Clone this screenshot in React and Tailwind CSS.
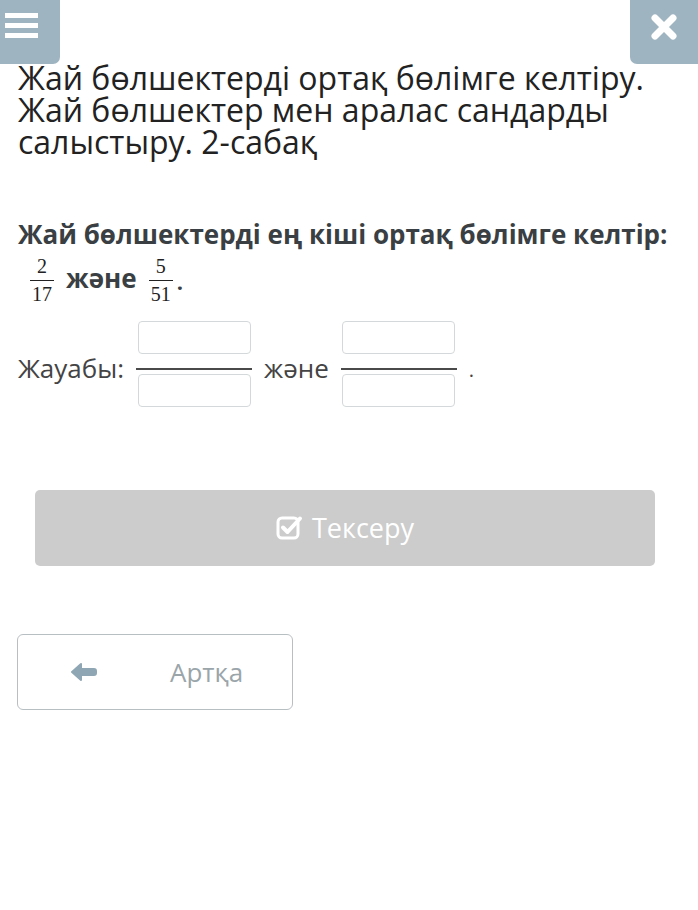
import React from 'react';

const font = { fontFamily: '"Open Sans", "Noto Sans", sans-serif' };

const Frac = ({ top, bottom }) => (
  <span className="inline-flex flex-col items-center align-middle mx-[2px] font-['Liberation_Serif',serif] font-normal text-[20px] leading-none text-[#222]">
    <span className="px-[2px] pb-[4px]">{top}</span>
    <span className="w-full border-t border-[#222]" />
    <span className="px-[2px] pt-[3px]">{bottom}</span>
  </span>
);

const InputFrac = () => (
  <div className="flex flex-col items-center w-[116px]">
    <div className="w-[113px] h-[33px] border border-[#d4d8da] rounded-[4px] bg-white" />
    <div className="w-[116px] h-[2px] bg-[#4a4a4a] mt-[14px] mb-[4px]" />
    <div className="w-[113px] h-[33px] border border-[#d4d8da] rounded-[4px] bg-white" />
  </div>
);

export default function App() {
  return (
    <div className="w-[698px] h-[910px] bg-white relative" style={font}>
      <div className="flex justify-between">
        <button className="w-[60px] h-[64px] bg-[#9fb4c1] rounded-br-[7px] flex flex-col gap-[5px] pt-[13px] pl-[5px]">
          <span className="block w-[33px] h-[5px] bg-white" />
          <span className="block w-[33px] h-[5px] bg-white" />
          <span className="block w-[33px] h-[5px] bg-white" />
        </button>
        <button className="w-[68px] h-[64px] bg-[#9fb4c1] rounded-bl-[7px] flex items-start justify-center pt-[14px]">
          <svg width="26" height="26" viewBox="0 0 26 26">
            <path d="M4 4 L22 22 M22 4 L4 22" stroke="white" strokeWidth="7" strokeLinecap="round" />
          </svg>
        </button>
      </div>

      <h1 className="px-[18px] text-[32px] leading-[32px] text-[#222] font-normal -mt-[2px]">
        Жай бөлшектерді ортақ бөлімге келтіру. Жай бөлшектер мен аралас сандарды салыстыру. 2-сабақ
      </h1>

      <div className="px-[18px] mt-[59px] text-[26px] font-bold text-[#3a3f44] leading-[34px] whitespace-nowrap">
        Жай бөлшектерді ең кіші ортақ бөлімге келтір:
      </div>
      <div className="px-[28px] mt-[5px] flex items-center gap-[10px] text-[26px] font-bold text-[#3a3f44]">
        <Frac top="2" bottom="17" />
        <span className="-mt-[4px]">және</span>
        <span className="flex items-center">
          <Frac top="5" bottom="51" />
          <span className="text-[22px] ml-[2px] mt-[2px]">.</span>
        </span>
      </div>

      <div className="px-[18px] mt-[17px] flex items-center text-[26px] text-[#444]">
        <span className="mr-[12px] mt-[8px]">Жауабы:</span>
        <InputFrac />
        <span className="mx-[12px] mt-[8px]">және</span>
        <InputFrac />
        <span className="ml-[12px] text-[20px] mt-[12px]">.</span>
      </div>

      <div className="px-[35px] mt-[83px]">
        <button className="w-[620px] h-[76px] bg-[#cccccc] rounded-[5px] flex items-center justify-center gap-[9px] text-white text-[27px]">
          <svg width="27" height="27" viewBox="0 0 27 27" fill="none" className="-mt-[2px]">
            <rect x="2" y="4" width="20" height="20" rx="4" stroke="white" strokeWidth="3" />
            <path d="M7 13.5 L11.5 18 L24 4.5" stroke="white" strokeWidth="4" strokeLinecap="round" strokeLinejoin="round" />
          </svg>
          <span>Тексеру</span>
        </button>
      </div>

      <div className="px-[17px] mt-[68px]">
        <button className="w-[276px] h-[76px] border border-[#b8bfc2] rounded-[6px] bg-white flex items-center">
          <svg className="ml-[52px]" width="27" height="22" viewBox="0 0 27 22">
            <path d="M2 11 L11 3 L11 8 L24 8 Q26 8 26 10 L26 12 Q26 14 24 14 L11 14 L11 19 Z" fill="#8fa7b4" strokeLinejoin="round" stroke="#8fa7b4" strokeWidth="2" />
          </svg>
          <span className="ml-[73px] text-[26px] text-[#9aa5aa]">Артқа</span>
        </button>
      </div>
    </div>
  );
}
